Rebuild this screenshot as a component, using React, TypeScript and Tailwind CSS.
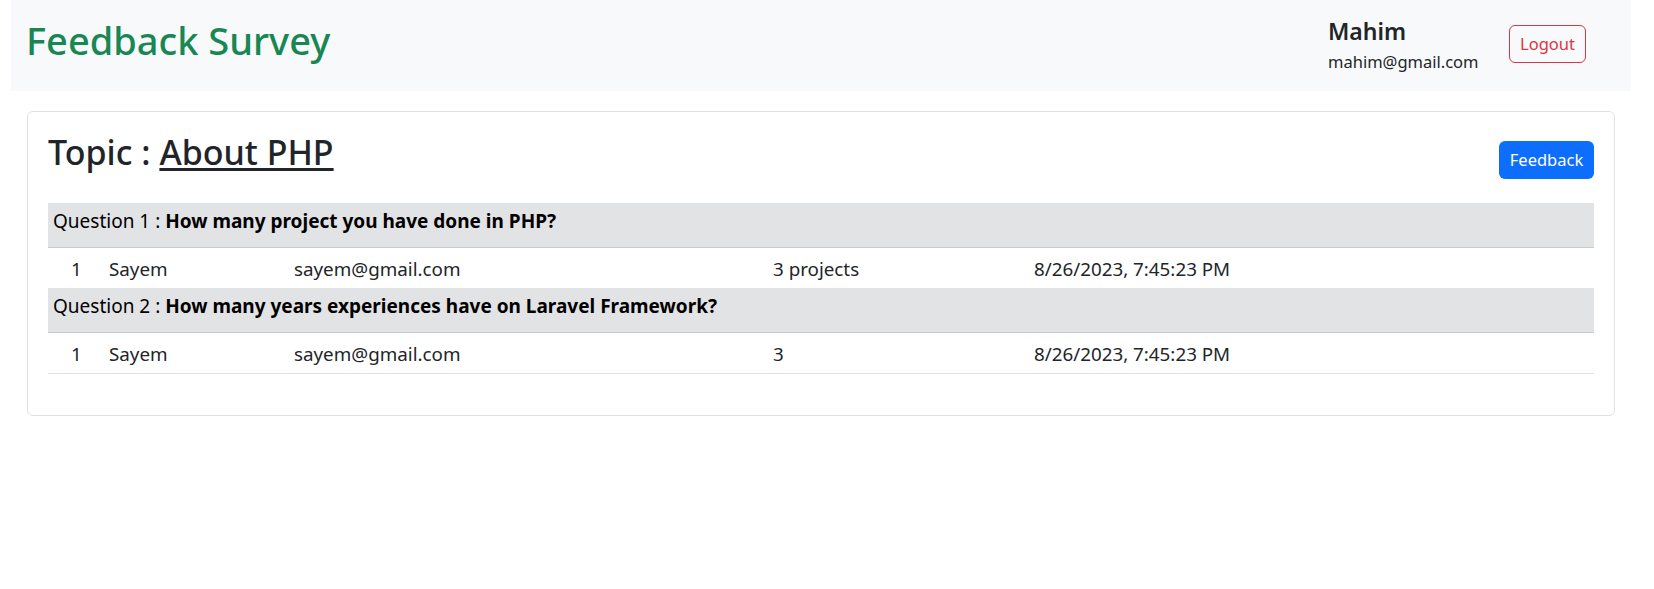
import React from "react";

const font = { fontFamily: '"Noto Sans", "Open Sans", Arial, sans-serif' };

type Row = { idx: number; name: string; email: string; answer: string; date: string };
type Q = { no: number; text: string; rows: Row[] };

const questions: Q[] = [
  {
    no: 1,
    text: "How many project you have done in PHP?",
    rows: [{ idx: 1, name: "Sayem", email: "sayem@gmail.com", answer: "3 projects", date: "8/26/2023, 7:45:23 PM" }],
  },
  {
    no: 2,
    text: "How many years experiences have on Laravel Framework?",
    rows: [{ idx: 1, name: "Sayem", email: "sayem@gmail.com", answer: "3", date: "8/26/2023, 7:45:23 PM" }],
  },
];

export default function App() {
  return (
    <div className="w-full h-[589px] bg-white text-[#212529]" style={font}>
      <header className="ml-[11px] w-[1620px] h-[91px] bg-[#f8f9fa] flex justify-between items-start pl-[15px] pr-[45px]">
        <h1 className="mt-[18px] text-[38px] leading-[1.2] font-medium text-[#198754]">Feedback Survey</h1>
        <div className="flex items-start gap-[31px]">
          <div className="mt-[17px] w-[150px] flex flex-col">
            <span className="text-[23px] leading-[28px] font-semibold">Mahim</span>
            <span className="mt-[5px] text-[16.5px] leading-[24px]">mahim@gmail.com</span>
          </div>
          <button className="mt-[25px] w-[77px] h-[38px] border border-[#dc3545] text-[#dc3545] rounded-[6px] text-[16.5px] leading-[24px] bg-transparent">
            Logout
          </button>
        </div>
      </header>

      <div className="ml-[27px] mt-[20px] w-[1588px] border border-[#dee2e6] rounded-[6px] p-[20px]">
        <div className="flex justify-between items-start">
          <h2 className="text-[34px] leading-[1.2] font-medium">
            Topic : <span className="underline decoration-[2.5px] underline-offset-[3px]">About PHP</span>
          </h2>
          <button className="mt-[9px] w-[95px] h-[38px] bg-[#0d6efd] text-white rounded-[6px] text-[16.5px] leading-[24px]">
            Feedback
          </button>
        </div>

        <div className="mt-[24px] mb-[21px] flex flex-col">
          {questions.map((q) => (
            <div key={q.no} className="flex flex-col">
              <div className="h-[45px] bg-[#e2e3e5] border-b border-[#c9cacc] pl-[5px] pt-[5px] text-[19px] leading-[26px] text-black">
                Question {q.no} : <span className="font-bold">{q.text}</span>
              </div>
              {q.rows.map((r, i) => (
                <div
                  key={i}
                  className={
                    "grid grid-cols-[61px_185px_479px_261px_1fr] pt-[8px] text-[18.8px] leading-[26px] " +
                    (q.no === questions.length ? "border-b border-[#dee2e6] h-[41px]" : "h-[40px]")
                  }
                >
                  <span className="pl-[23px]">{r.idx}</span>
                  <span>{r.name}</span>
                  <span>{r.email}</span>
                  <span>{r.answer}</span>
                  <span>{r.date}</span>
                </div>
              ))}
            </div>
          ))}
        </div>
      </div>
    </div>
  );
}
